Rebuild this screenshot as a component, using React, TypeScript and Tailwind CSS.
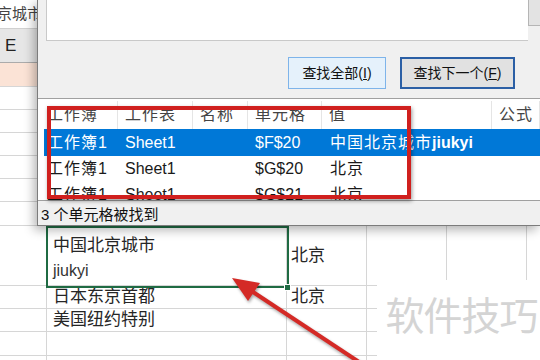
import React from 'react'

const FONT = "font-['Liberation_Sans','Noto_Sans_CJK_SC',sans-serif]"

// sheet column widths: D, E, F, G, H, I
const SHEET_COLS = ['w-[47px]', 'w-[240px]', 'w-[80px]', 'w-[80px]', 'w-[80px]', 'flex-1']

const LIST_HEAD = [
  { label: '工作簿', w: 'w-[78px]' },
  { label: '工作表', w: 'w-[75px]' },
  { label: '名称', w: 'w-[55px]' },
  { label: '单元格', w: 'w-[74px]' },
  { label: '值', w: 'w-[170px]' },
  { label: '公式', w: 'flex-1' },
]

const LIST_ROWS = [
  { book: '工作簿1', sheet: 'Sheet1', cell: '$F$20', cn: '中国北京城市', en: 'jiukyi', sel: true },
  { book: '工作簿1', sheet: 'Sheet1', cell: '$G$20', cn: '北京', en: '', sel: false },
  { book: '工作簿1', sheet: 'Sheet1', cell: '$G$21', cn: '北京', en: '', sel: false },
]

function SheetRow({ h, cells = [], bg = '' }: { h: string; cells?: React.ReactNode[]; bg?: string }) {
  return (
    <div className={`flex border-b border-[#d6d6d6] ${h} ${bg}`}>
      {SHEET_COLS.map((w, i) => (
        <div key={i} className={`${w} shrink-0 border-r border-[#d6d6d6] flex items-center pl-[4px] text-[17px] text-[#262626]`}>
          {cells[i]}
        </div>
      ))}
    </div>
  )
}

export default function App() {
  return (
    <div className={`relative w-[540px] h-[360px] overflow-hidden bg-white ${FONT}`}>
      {/* worksheet underneath */}
      <div className="flex flex-col">
        <div className="h-[29px] border-b border-[#d0d0d0] flex items-center overflow-hidden">
          <span className="ml-[-3px] text-[15px] text-[#444]">京城市</span>
        </div>
        <div className="h-[34px] bg-[#e6e6e6] border-b border-[#ababab] flex items-center pl-[5px] text-[17px] text-[#222]">
          E
        </div>
        <div className="h-[24px] bg-[#fbe3d6] border-b border-[#d6d6d6]" />
        <SheetRow h="h-[23px]" />
        <SheetRow h="h-[23px]" />
        <SheetRow h="h-[23px]" />
        <SheetRow h="h-[23px]" />
        <SheetRow h="h-[23px]" />
        <SheetRow h="h-[24px]" />
        <div className="flex border-b border-[#d6d6d6] h-[60px]">
          <div className="w-[47px] shrink-0 border-r border-[#d6d6d6]" />
          <div className="w-[240px] shrink-0 border-r border-[#d6d6d6] pl-[6px] pt-[7px] text-[#262626] leading-[25px]">
            <div className="text-[17px]">中国北京城市</div>
            <div className="text-[16px] font-light text-[#333]">jiukyi</div>
          </div>
          <div className="w-[80px] shrink-0 border-r border-[#d6d6d6] flex items-center pl-[4px] text-[17px] text-[#262626]">北京</div>
          <div className="w-[80px] shrink-0 border-r border-[#d6d6d6]" />
          <div className="w-[80px] shrink-0 border-r border-[#d6d6d6]" />
          <div className="flex-1" />
        </div>
        <SheetRow h="h-[23px]" cells={[null, <span className="pl-[2px]">日本东京首都</span>, '北京']} />
        <SheetRow h="h-[23px]" cells={[null, <span className="pl-[2px]">美国纽约特别</span>]} />
        <SheetRow h="h-[24px]" />
        <SheetRow h="h-[23px]" />
      </div>

      {/* active cell selection */}
      <div className="absolute left-[46px] top-[226px] w-[243px] h-[62px] border-2 border-[#1f6b43]" />
      <div className="absolute left-[284px] top-[284px] w-[7px] h-[7px] bg-[#1f6b43] border border-white" />

      {/* watermark */}
      <div className="absolute left-[377px] top-[280px] w-[163px] h-[80px] bg-white flex items-center justify-center">
        <span className="text-[39px] text-[#d4d4d4] tracking-[-1px] ml-[6px] mt-[-6px]">软件技巧</span>
      </div>

      {/* find & replace dialog */}
      <div className="absolute left-[37px] top-0 w-[503px] h-[226px] bg-[#f0f0f0] border-l border-b border-[#7c7c7c] shadow-[-3px_4px_10px_rgba(0,0,0,0.3)] flex flex-col">
        <div className="flex h-[41px] shrink-0">
          <div className="ml-[8px] w-[483px] bg-white border-l border-b border-[#c9c9c9]" />
          <div className="w-[12px] h-[26px] bg-[#e3e3e3] border-l border-b border-[#b5b5b5]" />
        </div>
        <div className="flex justify-end gap-[14px] pr-[25px] mt-[16px] shrink-0">
          <button className="w-[98px] h-[32px] bg-[#e5f1fb] border border-[#7eb4ea] text-[14px] text-[#111]">
            查找全部(<u>I</u>)
          </button>
          <button className="w-[115px] h-[32px] bg-[#e1e1e1] border-2 border-[#2b5fa5] text-[14px] text-[#111]">
            查找下一个(<u>F</u>)
          </button>
        </div>
        <div className="mt-[9px] h-[103px] shrink-0 bg-white border-t border-b border-[#a0a0a0] overflow-hidden text-[16px]">
          <div className="flex h-[30px] pl-[2px] pt-[2px] text-[#444]">
            {LIST_HEAD.map(c => (
              <div key={c.label} className={`${c.w} shrink-0 pl-[7px] flex items-center border-r border-[#e5e5e5] tracking-[1px]`}>
                {c.label}
              </div>
            ))}
          </div>
          {LIST_ROWS.map((r, i) => (
            <div
              key={i}
              className={`flex ml-[6px] ${i === 0 ? 'h-[27px]' : 'h-[26px]'} ${r.sel ? 'bg-[#0078d7] text-white' : 'text-[#1a1a1a]'}`}
            >
              <div className="w-[74px] shrink-0 pl-[3px] flex items-center tracking-[1px]">{r.book}</div>
              <div className="w-[75px] shrink-0 pl-[7px] flex items-center">{r.sheet}</div>
              <div className="w-[55px] shrink-0" />
              <div className="w-[74px] shrink-0 pl-[7px] flex items-center">{r.cell}</div>
              <div className="w-[170px] shrink-0 pl-[8px] flex items-center whitespace-nowrap">
                <span className="tracking-[1px]">{r.cn}</span>
                <span className="font-semibold">{r.en}</span>
              </div>
            </div>
          ))}
        </div>
        <div className="pl-[3px] pt-[3px] text-[15px] text-[#111]">3 个单元格被找到</div>
      </div>

      {/* annotation box */}
      <div className="absolute left-[47px] top-[106px] w-[364px] h-[93px] border-4 border-[#d0201e] shadow-[1px_2px_4px_rgba(0,0,0,0.4)]" />

      {/* annotation arrow */}
      <svg className="absolute left-0 top-0" width="540" height="360" viewBox="0 0 540 360">
        <g style={{ filter: 'drop-shadow(1px 2px 1.5px rgba(0,0,0,0.35))' }}>
          <line x1="362" y1="364" x2="250" y2="290" stroke="#d42a26" strokeWidth="4" />
          <polygon points="232,278 260,283 248,301" fill="#d42a26" />
        </g>
      </svg>
    </div>
  )
}
